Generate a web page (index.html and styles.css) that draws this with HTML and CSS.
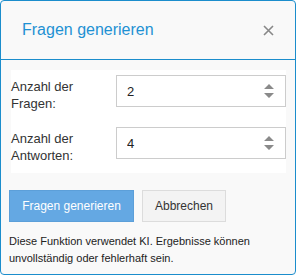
FILE: index.html
```html
<!DOCTYPE html>
<html lang="de">

<head>
    <meta charset="UTF-8">
    <meta name="viewport" content="width=device-width, initial-scale=1.0">
    <title>Fragen generieren</title>
    <link rel="stylesheet" href="styles.css">
</head>

<body>
    <div class="dialog">
        <div class="dialog-header">
            <span class="dialog-title">Fragen generieren</span>
            <button class="close-btn" aria-label="Schließen">
                <svg width="11" height="11" viewBox="0 0 11 11">
                    <path d="M1 1 L10 10 M10 1 L1 10" stroke="#888" stroke-width="1.6" fill="none"/>
                </svg>
            </button>
        </div>

        <div class="dialog-body">
            <div class="form">
                <div class="form-row">
                    <label class="form-label" for="anzahl-fragen">Anzahl der Fragen:</label>
                    <div class="spin-field">
                        <input type="text" id="anzahl-fragen" value="2" size="4">
                        <svg class="spinner" width="10" height="14" viewBox="0 0 10 14">
                            <path d="M5 0 L10 5 L0 5 Z M0 9 L10 9 L5 14 Z" fill="#8a8a8a"/>
                        </svg>
                    </div>
                </div>
                <div class="form-row">
                    <label class="form-label" for="anzahl-antworten">Anzahl der Antworten:</label>
                    <div class="spin-field">
                        <input type="text" id="anzahl-antworten" value="4" size="4">
                        <svg class="spinner" width="10" height="14" viewBox="0 0 10 14">
                            <path d="M5 0 L10 5 L0 5 Z M0 9 L10 9 L5 14 Z" fill="#8a8a8a"/>
                        </svg>
                    </div>
                </div>
            </div>
        </div>

        <div class="dialog-footer">
            <div class="buttons">
                <button class="btn btn-primary">Fragen generieren</button>
                <button class="btn btn-default">Abbrechen</button>
            </div>
            <p class="hint">Diese Funktion verwendet KI. Ergebnisse können unvollständig oder fehlerhaft sein.</p>
        </div>
    </div>
</body>

</html>
```

FILE: styles.css
```css
body {
    margin: 0;
    font-family: "Liberation Sans", Arial, sans-serif;
    background-color: #fff;
}

.dialog {
    width: 296px;
    height: 275px;
    box-sizing: border-box;
    border: 1px solid #1b8dcc;
    border-radius: 4px;
    background-color: #f9f9f9;
    overflow: hidden;
}

.dialog-header {
    height: 58px;
    display: flex;
    align-items: center;
    justify-content: space-between;
    padding: 0 21px 0 21px;
    border-bottom: 1px solid #1b8dcc;
}

.dialog-title {
    font-size: 16px;
    color: #1f91d3;
}

.close-btn {
    border: none;
    background: none;
    padding: 0;
    width: 11px;
    height: 11px;
    display: flex;
}

.dialog-body {
    padding: 10px 9px 0 10px;
}

.form {
    background-color: #fff;
    padding: 5px 0 9px 0;
    display: flex;
    flex-direction: column;
    gap: 15px;
}

.form-row {
    display: flex;
    align-items: flex-start;
}

.form-label {
    width: 105px;
    flex: none;
    padding-top: 3px;
    font-size: 13px;
    line-height: 17px;
    color: #333;
}

.spin-field {
    flex: 1;
    min-width: 0;
    height: 32px;
    box-sizing: border-box;
    border: 1px solid #ccc;
    display: flex;
    align-items: center;
    padding: 0 11px 0 10px;
}

.spin-field input {
    flex: 1;
    width: 0;
    min-width: 0;
    border: none;
    outline: none;
    padding: 0;
    font-family: inherit;
    font-size: 13px;
    color: #222;
    background: transparent;
}

.spinner {
    flex: none;
}

.dialog-footer {
    padding: 17px 8px 0 8px;
}

.buttons {
    display: flex;
    gap: 8px;
}

.btn {
    height: 32px;
    box-sizing: border-box;
    font-family: inherit;
    font-size: 12px;
    padding: 0;
}

.btn-primary {
    width: 125px;
    background-color: #64a8e3;
    border: 1px solid #5c9fd9;
    color: #fff;
}

.btn-default {
    width: 84px;
    background-color: #f3f3f3;
    border: 1px solid #dcdcdc;
    color: #333;
}

.hint {
    margin: 11px 0 0 0;
    font-size: 11px;
    line-height: 17px;
    color: #222;
}
```
